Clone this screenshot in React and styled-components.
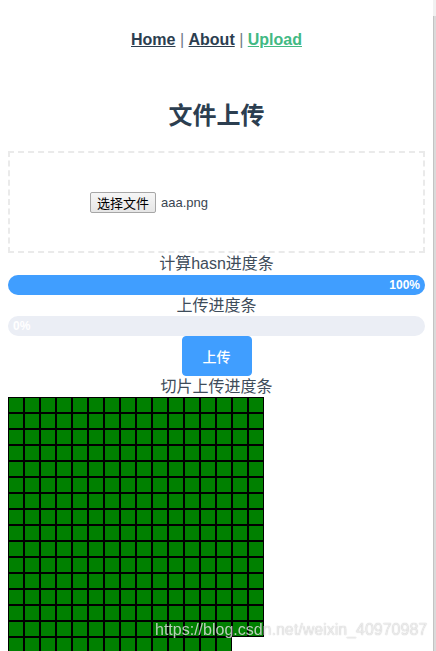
import React from "react";
import styled, { createGlobalStyle } from "styled-components";

const Global = createGlobalStyle`
  html, body { margin: 0; padding: 0; overflow: hidden; background: #fff; }
  body { font-family: "Liberation Sans", Arial, "Noto Sans CJK SC", sans-serif; }
`;

const Page = styled.div`
  width: 417px;
  padding: 0 8px;
  color: #2c3e50;
  text-align: center;
  -webkit-font-smoothing: antialiased;
`;

const Nav = styled.nav`
  padding: 31px 0 29px;
  font-size: 16px;
  line-height: 18px;
`;

const NavLink = styled.a`
  font-weight: bold;
  color: ${(p) => (p.$active ? "#42b983" : "#2c3e50")};
  text-decoration: underline;
`;

const Sep = styled.span`
  color: #6f7b87;
`;

const Title = styled.h2`
  margin: 24px 0 21px;
  font-size: 24px;
  line-height: 28px;
  font-weight: bold;
  font-family: "Liberation Sans", "Noto Sans CJK SC", sans-serif;
`;

const DropBox = styled.div`
  box-sizing: border-box;
  height: 102px;
  border: 2px dashed #eaeaea;
  display: flex;
  align-items: center;
  justify-content: center;
`;

const FileWidget = styled.div`
  width: 253px;
  display: flex;
  align-items: center;
  text-align: left;
`;

const FileButton = styled.button`
  box-sizing: border-box;
  height: 21px;
  padding: 0 6px;
  border: 1px solid #a6a6a6;
  border-radius: 2px;
  background: linear-gradient(#f6f6f6, #e6e6e6);
  color: #000;
  font-family: "Noto Sans CJK SC", sans-serif;
  font-size: 13px;
  line-height: 19px;
`;

const FileName = styled.span`
  margin-left: 5px;
  font-size: 13px;
  color: #3a4652;
`;

const Label = styled.div`
  font-size: 16px;
  line-height: ${(p) => p.$lh}px;
  color: #3e4c5a;
  font-family: "Liberation Sans", "Noto Sans CJK SC", sans-serif;
`;

const BarOuter = styled.div`
  height: 20px;
  border-radius: 100px;
  background: #ebeef5;
  overflow: visible;
  position: relative;
`;

const BarInner = styled.div`
  height: 100%;
  border-radius: 100px;
  background: #409eff;
  text-align: right;
  white-space: nowrap;
  line-height: 20px;
`;

const BarText = styled.span`
  display: inline-block;
  margin: 0 5px;
  color: #fff;
  font-size: 12px;
  font-weight: bold;
  vertical-align: top;
`;

const UploadButton = styled.button`
  display: block;
  margin: 0 auto;
  box-sizing: border-box;
  width: 70px;
  height: 40px;
  padding: 0;
  border: 1px solid #409eff;
  border-radius: 4px;
  background: #409eff;
  color: #fff;
  font-size: 14px;
  font-family: "Noto Sans CJK SC", sans-serif;
  font-weight: 500;
`;

const ChunkGrid = styled.div`
  width: 256px;
  display: flex;
  flex-wrap: wrap;
  align-content: flex-start;
`;

const Chunk = styled.div`
  width: 14px;
  height: 14px;
  border: 1px solid #000;
  background: ${(p) => (p.$done ? "#008000" : "#fff")};
`;

const Scrollbar = styled.div`
  position: fixed;
  top: 0;
  right: 0;
  width: 3px;
  height: 100%;
  background: #f1f1f1;
`;

const Thumb = styled.div`
  position: absolute;
  top: 16px;
  left: 0;
  right: 0;
  bottom: 0;
  background: #dadada;
  border-left: 1px solid #c3c3c3;
`;

const Watermark = styled.div`
  position: fixed;
  left: 155px;
  top: 621px;
  font-family: "Liberation Sans", Arial, sans-serif;
  font-size: 16px;
  line-height: 18px;
  color: rgba(255, 255, 255, 0.72);
  text-shadow: 0 0 1px rgba(0, 0, 0, 0.35);
  white-space: nowrap;
  pointer-events: none;
`;

function Progress({ percent }) {
  return (
    <BarOuter>
      <BarInner style={{ width: `${percent}%` }}>
        <BarText>{percent}%</BarText>
      </BarInner>
    </BarOuter>
  );
}

const chunks = Array.from({ length: 254 }, (_, i) => i);

export default function App() {
  return (
    <>
      <Global />
      <Page>
        <Nav>
          <NavLink href="#/">Home</NavLink>
          <Sep> | </Sep>
          <NavLink href="#/about">About</NavLink>
          <Sep> | </Sep>
          <NavLink href="#/upload" $active>
            Upload
          </NavLink>
        </Nav>
        <Title>文件上传</Title>
        <DropBox>
          <FileWidget>
            <FileButton type="button">选择文件</FileButton>
            <FileName>aaa.png</FileName>
          </FileWidget>
        </DropBox>
        <Label $lh={22}>计算hasn进度条</Label>
        <Progress percent={100} />
        <Label $lh={21}>上传进度条</Label>
        <Progress percent={0} />
        <UploadButton type="button">上传</UploadButton>
        <Label $lh={21}>切片上传进度条</Label>
        <ChunkGrid>
          {chunks.map((i) => (
            <Chunk key={i} $done />
          ))}
        </ChunkGrid>
      </Page>
      <Scrollbar>
        <Thumb />
      </Scrollbar>
      <Watermark>https://blog.csdn.net/weixin_40970987</Watermark>
    </>
  );
}
